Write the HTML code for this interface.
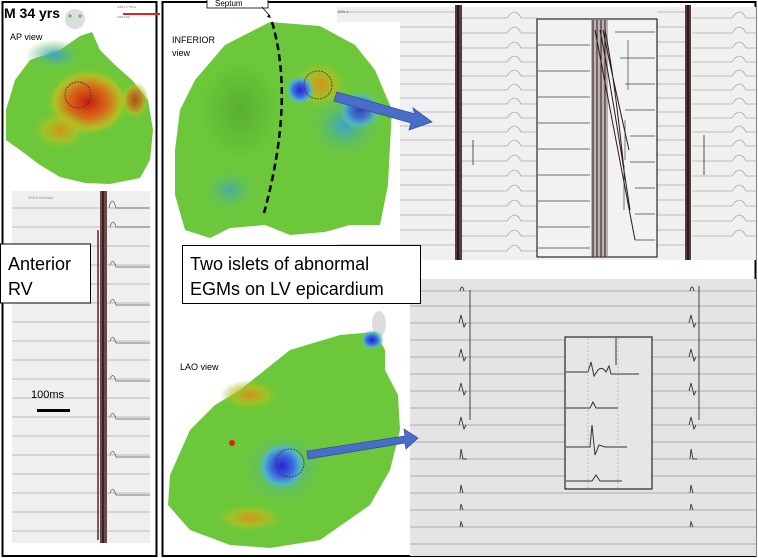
<!DOCTYPE html>
<html><head><meta charset="utf-8"><style>
html,body{margin:0;padding:0;background:#fff;width:758px;height:558px;overflow:hidden}
svg{display:block}
text{font-family:"Liberation Sans",sans-serif}
</style></head><body>
<svg width="758" height="558" viewBox="0 0 758 558" xmlns="http://www.w3.org/2000/svg">
<defs>
<radialGradient id="red1" cx="50%" cy="50%" r="50%"><stop offset="0" stop-color="#c81e0a"/><stop offset="0.5" stop-color="#d8701a"/><stop offset="0.8" stop-color="#c8c020" stop-opacity="0.7"/><stop offset="1" stop-color="#7ac828" stop-opacity="0"/></radialGradient>
<radialGradient id="blue1" cx="50%" cy="50%" r="50%"><stop offset="0" stop-color="#2a20d0"/><stop offset="0.45" stop-color="#3a6ae0"/><stop offset="0.75" stop-color="#50b8d8" stop-opacity="0.8"/><stop offset="1" stop-color="#6cc848" stop-opacity="0"/></radialGradient>
<radialGradient id="or1" cx="50%" cy="50%" r="50%"><stop offset="0" stop-color="#d8901a"/><stop offset="0.6" stop-color="#b8c020" stop-opacity="0.6"/><stop offset="1" stop-color="#7ac828" stop-opacity="0"/></radialGradient>
<radialGradient id="cy1" cx="50%" cy="50%" r="50%"><stop offset="0" stop-color="#3aa0d0"/><stop offset="1" stop-color="#6cc848" stop-opacity="0"/></radialGradient>
<radialGradient id="dk" cx="50%" cy="50%" r="50%"><stop offset="0" stop-color="#3a8a20" stop-opacity="0.4"/><stop offset="1" stop-color="#3a8a20" stop-opacity="0"/></radialGradient>
</defs>

<rect x="2.5" y="2" width="154" height="554" fill="#fff" stroke="#000" stroke-width="2"/>
<rect x="162.5" y="2" width="593" height="554" fill="#fff" stroke="#000" stroke-width="2"/>

<text x="4" y="18" font-size="14" font-weight="bold">M 34 yrs</text>
<ellipse cx="75" cy="19" rx="10" ry="10" fill="#ddd"/>
<circle cx="70" cy="16" r="1.6" fill="#4c4"/><circle cx="80" cy="16" r="1.6" fill="#4c4"/>
<rect x="123" y="13" width="37" height="2" fill="#d22"/>
<text x="117" y="8" font-size="3" fill="#666">4.00 ft  1.75mv</text>
<text x="117" y="18" font-size="3" fill="#666">4.00  4.00</text>
<text x="10" y="40" font-size="9">AP view</text>
<path d="M60 50 L80 36 L92 32 L100 50 L115 65 L132 80 L148 100 L153 130 L150 160 L140 178 L110 184 L85 183 L60 177 L40 165 L20 150 L6 140 L6 110 L15 80 L30 60 Z" fill="#6cc83a"/>
<ellipse cx="55" cy="55" rx="30" ry="16" fill="url(#cy1)"/>
<ellipse cx="88" cy="102" rx="42" ry="34" fill="url(#red1)"/>
<ellipse cx="60" cy="130" rx="28" ry="20" fill="url(#or1)"/>
<ellipse cx="135" cy="100" rx="14" ry="18" fill="url(#red1)" opacity="0.7"/>
<circle cx="78" cy="95" r="13" fill="none" stroke="#333" stroke-dasharray="2 1" stroke-width="0.8"/>

<rect x="12" y="191" width="138" height="352" fill="#efefef"/>
<text x="28" y="199" font-size="4" fill="#888">200.0 mm/sec</text>
<g stroke="#888" stroke-width="0.6" fill="none">
<path d="M12 208H150M12 227H150M12 246H150M12 265H150M12 284H150M12 303H150M12 322H150M12 341H150M12 360H150M12 379H150M12 398H150M12 417H150M12 436H150M12 455H150M12 474H150M12 493H150M12 512H150M12 531H150"/>
</g>
<rect x="100" y="191" width="7" height="352" fill="#6a4a4a"/>
<rect x="102" y="191" width="2" height="352" fill="#3a2222"/>
<rect x="97" y="230" width="2" height="310" fill="#7a5a5a"/>
<g stroke="#555" stroke-width="0.7" fill="none">
<path d="M109 208q3 -14 7 0h34M110 227q3 -10 6 0h34M110 265q3 -8 6 2h34M110 303q3 -8 6 2h34M110 341q3 -8 6 2h34M110 379q3 -8 6 2h34M110 417q3 -8 6 2h34M110 455q3 -8 6 2h34M110 493q3 -8 6 2h34"/>
</g>
<rect x="0.5" y="244" width="90" height="59" fill="#fff" stroke="#000"/>
<text x="8" y="270" font-size="18">Anterior</text>
<text x="8" y="295" font-size="18">RV</text>
<text x="31" y="398" font-size="11">100ms</text>
<rect x="37" y="409" width="33" height="3" fill="#000"/>

<rect x="337" y="7" width="419" height="253" fill="#f0f0f0"/>
<text x="338" y="13" font-size="4" fill="#555">20A 1</text>
<g stroke="#888" stroke-width="0.6" fill="none">
<path d="M337 12H455M337 27H455M337 42H455M337 56H455M337 70H455M337 84H455M337 98H455M337 112H455M337 126H455M337 140H455M337 155H455M337 170H455M337 185H455M337 200H455M337 215H455M337 230H455M337 245H455"/>
<path d="M462 18h45q8 -12 14 0h16M462 33h45q8 -12 14 0h16M462 48h45q8 -12 14 0h16M462 62h45q8 -12 14 0h16M462 76h45q8 -12 14 0h16M462 90h45q8 -12 14 0h16M462 104h45q8 -12 14 0h16M462 118h45q8 -12 14 0h16M462 132h45q8 -12 14 0h16M462 146h45q8 -12 14 0h16M462 161h45q8 -12 14 0h16M462 176h45q8 -12 14 0h16M462 191h45q8 -12 14 0h16M462 206h45q8 -12 14 0h16M462 221h45q8 -12 14 0h16M462 236h45q8 -12 14 0h16M462 251h45q8 -12 14 0h16"/>
<path d="M657 12H685M657 27H685M657 42H685M657 56H685M657 70H685M657 84H685M657 98H685M657 112H685M657 126H685M657 140H685M657 155H685M657 170H685M657 185H685M657 200H685M657 215H685M657 230H685M657 245H685"/>
<path d="M692 18h40q8 -12 14 0h10M692 33h40q8 -12 14 0h10M692 48h40q8 -12 14 0h10M692 62h40q8 -12 14 0h10M692 76h40q8 -12 14 0h10M692 90h40q8 -12 14 0h10M692 104h40q8 -12 14 0h10M692 118h40q8 -12 14 0h10M692 132h40q8 -12 14 0h10M692 146h40q8 -12 14 0h10M692 161h40q8 -12 14 0h10M692 176h40q8 -12 14 0h10M692 191h40q8 -12 14 0h10M692 206h40q8 -12 14 0h10M692 221h40q8 -12 14 0h10M692 236h40q8 -12 14 0h10"/>
</g>
<rect x="455" y="5" width="7" height="255" fill="#5a3a3a"/>
<rect x="457" y="5" width="2" height="255" fill="#2a1818"/>
<rect x="685" y="5" width="6" height="255" fill="#5a3a3a"/>
<rect x="687" y="5" width="2" height="255" fill="#2a1818"/>
<g stroke="#3a2a2a" stroke-width="0.8" fill="none"><path d="M473 140V165M704 135V175"/></g>
<rect x="537" y="19" width="120" height="238" fill="#f2f2f2" stroke="#000" stroke-width="1"/>
<g stroke="#444" stroke-width="0.7" fill="none">
<path d="M538 45H590M538 71H590M538 97H590M538 123H590M538 149H590M538 175H590M538 201H590M538 227H590M538 248H590"/>
<path d="M615 32H655M620 58H655M625 84H655M625 110H655M630 136H655M630 162H655M635 188H655M635 214H655M635 240H655"/>
<path d="M628 40V90M625 120V160M624 165V210"/>
</g>
<rect x="591" y="20" width="17" height="237" fill="#8a7070" opacity="0.5"/>
<g stroke="#2a1a1a" stroke-width="1" fill="none">
<path d="M593 20V257M597 20V257M601 20V257M605 20V257M595 30q15 80 40 210M600 30q12 60 30 180M605 30q10 50 20 150M603 30q8 40 26 120"/>
</g>

<rect x="165" y="22" width="235" height="222" fill="#fff"/>
<path d="M270 22 L320 26 L355 45 L375 70 L392 110 L390 145 L388 185 L380 225 L350 225 L325 232 L290 235 L265 225 L230 228 L210 238 L185 230 L175 195 L175 150 L180 110 L195 80 L225 45 Z" fill="#6cc83a"/>
<ellipse cx="240" cy="110" rx="40" ry="50" fill="url(#dk)"/>
<ellipse cx="320" cy="85" rx="28" ry="25" fill="url(#or1)"/>
<ellipse cx="300" cy="90" rx="15" ry="15" fill="url(#blue1)"/>
<ellipse cx="345" cy="125" rx="40" ry="35" fill="url(#cy1)"/>
<ellipse cx="360" cy="110" rx="22" ry="20" fill="url(#blue1)" opacity="0.8"/>
<ellipse cx="230" cy="190" rx="30" ry="25" fill="url(#cy1)" opacity="0.7"/>
<circle cx="318" cy="85" r="14" fill="none" stroke="#333" stroke-dasharray="2 1" stroke-width="0.8"/>
<path d="M272 22 Q295 100 264 213" fill="none" stroke="#000" stroke-width="2.5" stroke-dasharray="7 4"/>
<rect x="207" y="-1" width="61" height="9" fill="#fff" stroke="#000" stroke-width="0.8"/>
<text x="215" y="6" font-size="8">Septum</text>
<path d="M262 7 L270 16" stroke="#000" stroke-width="0.8"/><path d="M271 18 l-4 -1 l2 -3 z" fill="#000"/>
<text x="172" y="43" font-size="9">INFERIOR</text>
<text x="172" y="56" font-size="9">view</text>
<path d="M337 92 L415 114 L413 108 L432 122 L409 130 L411 123 L334 101 Z" fill="#4a6ec8" stroke="#33509a" stroke-width="0.8"/>

<rect x="410" y="279" width="346" height="277" fill="#e4e4e4"/>
<g stroke="#777" stroke-width="0.6" fill="none">
<path d="M420 291H756M410 306H756M410 323H756M410 340H756M410 357H756M410 374H756M410 391H756M410 408H756M410 425H756M410 442H756M410 459H756M410 476H756M410 493H756M410 510H756M410 527H756M410 544H756"/>
</g>
<g stroke="#333" stroke-width="0.9" fill="none">
<path d="M460 291q2 -8 4 0M459 323l2 -8l3 12l2 -4M459 357l2 -8l3 12l2 -4M459 391l2 -8l3 12l2 -4M459 425l2 -8l3 12l2 -4M460 459l1 -10l2 10h4M460 493l1 -8l2 8M460 510l1 -6l2 6M460 527l1 -5l2 5"/>
<path d="M690 291q2 -8 4 0M689 323l2 -8l3 12l2 -4M689 357l2 -8l3 12l2 -4M689 391l2 -8l3 12l2 -4M689 425l2 -8l3 12l2 -4M690 459l1 -10l2 10h4M690 493l1 -8l2 8M690 510l1 -6l2 6M690 527l1 -5l2 5"/>
<path d="M470 290V420M699 286V420"/>
</g>
<rect x="565" y="337" width="87" height="152" fill="#e6e6e6" stroke="#000" stroke-width="1"/>
<g stroke="#333" stroke-width="1" fill="none">
<path d="M566 372H588l3 -10l3 14l4 -6q4 -4 8 2l3 -6l2 8h28M566 408H590l3 -6l3 6h22M566 447H590l2 -22l3 30l4 -10l6 2h22M566 481H592l4 -6l4 6h22M616 338V365"/>
</g>
<path d="M588 338V489M618 338V489" stroke="#c88" stroke-width="0.6" stroke-dasharray="2 2"/>

<rect x="182.5" y="245.5" width="238" height="58" fill="#fff" stroke="#000"/>
<text x="190" y="270" font-size="18">Two islets of abnormal</text>
<text x="190" y="295" font-size="18">EGMs on LV epicardium</text>

<rect x="310" y="305" width="100" height="245" fill="#fff"/>
<ellipse cx="379" cy="324" rx="7" ry="13" fill="#ddd"/>
<text x="180" y="370" font-size="9">LAO view</text>
<path d="M240 390 L290 350 L340 335 L375 332 L385 350 L385 370 L398 395 L400 430 L390 470 L370 505 L320 540 L270 548 L230 545 L190 530 L168 505 L170 475 L190 430 L215 405 Z" fill="#6cc83a"/>
<ellipse cx="250" cy="395" rx="30" ry="15" fill="url(#or1)"/>
<ellipse cx="283" cy="468" rx="45" ry="40" fill="url(#cy1)"/>
<ellipse cx="282" cy="466" rx="25" ry="25" fill="url(#blue1)"/>
<ellipse cx="372" cy="340" rx="12" ry="10" fill="url(#blue1)"/>
<ellipse cx="250" cy="518" rx="35" ry="14" fill="url(#or1)"/>
<circle cx="232" cy="443" r="3" fill="#d21"/>
<circle cx="290" cy="463" r="14" fill="none" stroke="#333" stroke-dasharray="2 1" stroke-width="0.8"/>
<path d="M307 451 L405 436 L404 429 L418 438 L406 449 L405 443 L308 459 Z" fill="#4a6ec8" stroke="#33509a" stroke-width="0.8"/>
</svg>
</body></html>
